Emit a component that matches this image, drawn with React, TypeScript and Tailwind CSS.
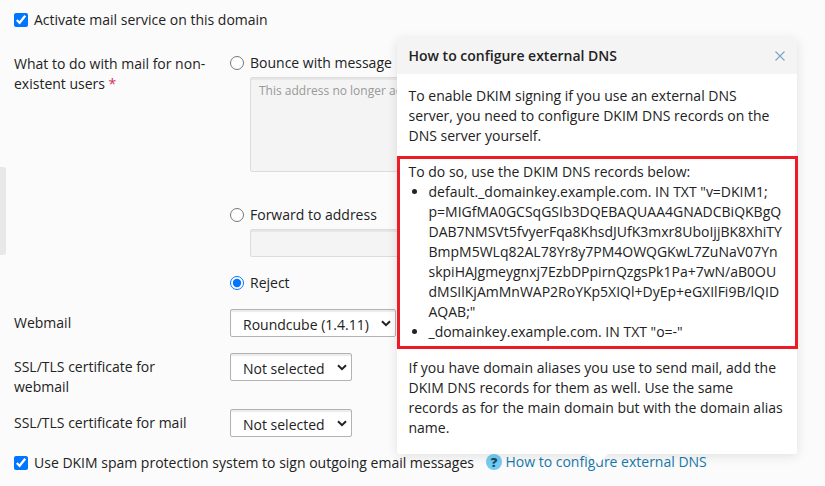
import type { ReactNode } from "react";

const DKIM_KEY_LINES = [
  'default._domainkey.example.com. IN TXT "v=DKIM1;',
  "p=MIGfMA0GCSqGSIb3DQEBAQUAA4GNADCBiQKBgQ",
  "DAB7NMSVt5fvyerFqa8KhsdJUfK3mxr8UboIjjBK8XhiTY",
  "BmpM5WLq82AL78Yr8y7PM4OWQGKwL7ZuNaV07Yn",
  "skpiHAJgmeygnxj7EzbDPpirnQzgsPk1Pa+7wN/aB0OU",
  "dMSIlKjAmMnWAP2RoYKp5XIQl+DyEp+eGXIlFi9B/lQID",
  'AQAB;"',
];

function Row({ label, className, children }: { label: ReactNode; className: string; children: ReactNode }) {
  return (
    <div className={`flex ${className}`}>
      <div className="w-[216px] shrink-0 pt-1 pr-4">{label}</div>
      {children}
    </div>
  );
}

function SelectBox({ value, className }: { value: string; className: string }) {
  return (
    <button
      type="button"
      className={`flex h-7 items-center justify-between rounded-[2px] border border-[#b3b3b3] bg-white pt-1 pr-1 pl-3 shadow-[inset_0_2px_1px_#ebebeb] ${className}`}
    >
      <span className="whitespace-nowrap">{value}</span>
      <svg width="10" height="7" viewBox="0 0 10 7" className="mb-1 shrink-0" fill="none" stroke="#222" strokeWidth="2">
        <path d="M1 1.2 5 5.2 9 1.2" />
      </svg>
    </button>
  );
}

function RadioLine({ label, checked = false }: { label: string; checked?: boolean }) {
  return (
    <label className="flex h-5 items-center gap-1.5">
      <input type="radio" className="m-0 size-3.5" checked={checked} readOnly />
      <span>{label}</span>
    </label>
  );
}

function Popover() {
  return (
    <section className="absolute top-[38px] left-[397px] h-[416px] w-[400px] rounded-[3px] bg-white shadow-[0_2px_12px_rgba(0,0,0,0.11)]">
      <svg width="20" height="10" viewBox="0 0 20 10" className="absolute top-[416px] left-[190.5px]">
        <path d="M0 0H20L10 10Z" fill="#fff" />
      </svg>
      <header className="flex h-9 items-center justify-between rounded-t-[3px] bg-[#f4f4f4] px-3">
        <h2 className="-ml-[0.5px] text-sm leading-5 font-semibold">How to configure external DNS</h2>
        <svg width="10" height="10" viewBox="0 0 10 10" stroke="#7fa5c3" strokeWidth="1.1">
          <path d="M.5 .5 9.5 9.5M9.5 .5 .5 9.5" />
        </svg>
      </header>
      <div className="pt-3 pr-3 pl-[11.5px]">
        <p className="whitespace-nowrap">
          To enable DKIM signing if you use an external DNS
          <br />
          server, you need to configure DKIM DNS records on the
          <br />
          DNS server yourself.
        </p>
        <p className="mt-4">To do so, use the DKIM DNS records below:</p>
        <ul className="list-disc pl-5 whitespace-nowrap">
          <li>
            {DKIM_KEY_LINES.map((line) => (
              <span key={line} className="block">
                {line}
              </span>
            ))}
          </li>
          <li>_domainkey.example.com. IN TXT "o=-"</li>
        </ul>
        <p className="mt-4 whitespace-nowrap">
          If you have domain aliases you use to send mail, add the
          <br />
          DKIM DNS records for them as well. Use the same
          <br />
          records as for the main domain but with the domain alias
          <br />
          name.
        </p>
      </div>
      <div className="absolute top-[118px] left-0 h-[193px] w-[401px] border-3 border-[#ed1c24]" />
    </section>
  );
}

export default function App() {
  return (
    <main className="relative h-[486px] w-[825px] overflow-hidden bg-[#fbfbfb] pl-3.5 font-['Open_Sans','Noto_Sans',sans-serif] text-sm leading-5 text-[#222]">
      <div className="absolute top-[167px] left-0 h-[88px] w-1.5 rounded-r-[3px] bg-[#e8e8e8]" />
      <label className="flex h-[30px] items-center gap-1.5 pt-2.5">
        <input type="checkbox" className="m-0 size-3.5" checked readOnly />
        <span>Activate mail service on this domain</span>
      </label>

      <Row
        className="mt-5 h-[243px]"
        label={
          <>
            What to do with mail for non-
            <br />
            existent users <span className="text-[#d0365a]">*</span>
          </>
        }
      >
        <div className="w-[300px] pt-[3px]">
          <RadioLine label="Bounce with message" />
          <div className="mt-1 ml-5 h-[95px] rounded-[2px] border border-[#dcdcdc] bg-[#f4f4f4] px-2 pt-1 text-[12px] leading-[18px] whitespace-nowrap text-[#999] shadow-[inset_0_2px_1px_#e6e6e6]">
            This address no longer ac
          </div>
          <div className="mt-[33px]">
            <RadioLine label="Forward to address" />
            <div className="mt-1 ml-5 h-7 rounded-[2px] border border-[#dcdcdc] bg-[#f4f4f4] shadow-[inset_0_2px_1px_#e6e6e6]" />
          </div>
          <div className="mt-4">
            <RadioLine label="Reject" checked />
          </div>
        </div>
      </Row>

      <Row className="mt-4 h-7" label="Webmail">
        <SelectBox value="Roundcube (1.4.11)" className="w-[166px]" />
      </Row>
      <Row
        className="mt-4 h-11"
        label={
          <>
            SSL/TLS certificate for
            <br />
            webmail
          </>
        }
      >
        <SelectBox value="Not selected" className="w-[122px]" />
      </Row>
      <Row className="mt-3 h-7" label="SSL/TLS certificate for mail">
        <SelectBox value="Not selected" className="w-[122px]" />
      </Row>

      <div className="mt-4 flex h-5 items-center whitespace-nowrap">
        <label className="flex items-center gap-1.5">
          <input type="checkbox" className="m-0 size-3.5" checked readOnly />
          <span>Use DKIM spam protection system to sign outgoing email messages</span>
        </label>
        <span className="mb-0.5 ml-3 flex items-center gap-[3.5px] text-[#1779ad]">
          <span className="flex size-4 items-center justify-center rounded-full bg-[#73ccf0] text-[13px] leading-4 font-extrabold text-[#124b66]">
            ?
          </span>
          How to configure external DNS
        </span>
      </div>

      <Popover />
    </main>
  );
}
